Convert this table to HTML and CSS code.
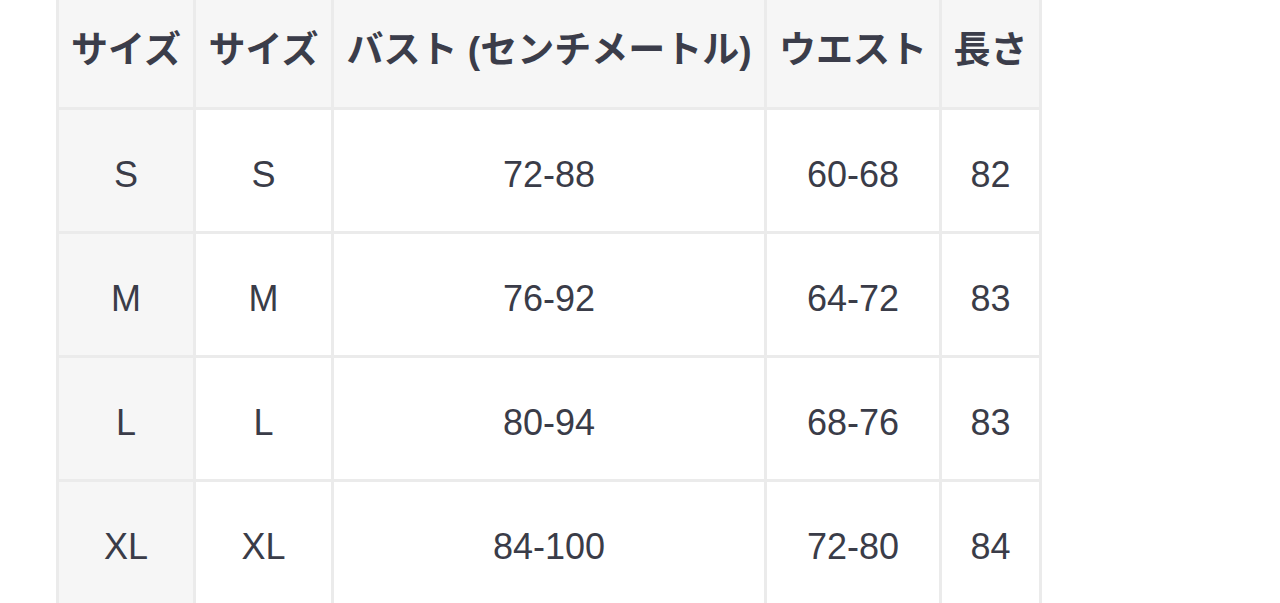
FILE: index.html
```html
<!DOCTYPE html>
<html lang="ja">
<head>
<meta charset="utf-8">
<title>サイズ表</title>
<link rel="stylesheet" href="styles.css">
</head>
<body>
<div class="wrap">
  <div class="size-table">
    <div class="cell head">サイズ</div>
    <div class="cell head">サイズ</div>
    <div class="cell head">バスト (センチメートル)</div>
    <div class="cell head">ウエスト</div>
    <div class="cell head">長さ</div>

    <div class="cell first">S</div>
    <div class="cell">S</div>
    <div class="cell">72-88</div>
    <div class="cell">60-68</div>
    <div class="cell">82</div>

    <div class="cell first">M</div>
    <div class="cell">M</div>
    <div class="cell">76-92</div>
    <div class="cell">64-72</div>
    <div class="cell">83</div>

    <div class="cell first">L</div>
    <div class="cell">L</div>
    <div class="cell">80-94</div>
    <div class="cell">68-76</div>
    <div class="cell">83</div>

    <div class="cell first">XL</div>
    <div class="cell">XL</div>
    <div class="cell">84-100</div>
    <div class="cell">72-80</div>
    <div class="cell">84</div>
  </div>
</div>
</body>
</html>
```

FILE: styles.css
```css
html, body {
  margin: 0;
  padding: 0;
  background: #ffffff;
}

body {
  overflow: hidden;
}

.wrap {
  padding-left: 56px;
  margin-top: -17px;
}

.size-table {
  display: grid;
  grid-template-columns: 134px 135px 430px 172px 97px;
  grid-auto-rows: 121px;
  gap: 3px;
  padding: 3px;
  width: max-content;
  background: #ebebeb;
  font-family: "Liberation Sans", "Noto Sans CJK JP", sans-serif;
  font-size: 36px;
  color: #3a3c48;
}

.cell {
  display: flex;
  align-items: center;
  justify-content: center;
  background: #ffffff;
  white-space: nowrap;
  padding-top: 8px;
  box-sizing: border-box;
}

.head {
  background: #f6f6f6;
  font-weight: bold;
  font-size: 37px;
  padding-top: 0;
  color: #3b3d4a;
}

.first {
  background: #f6f6f6;
}
```
